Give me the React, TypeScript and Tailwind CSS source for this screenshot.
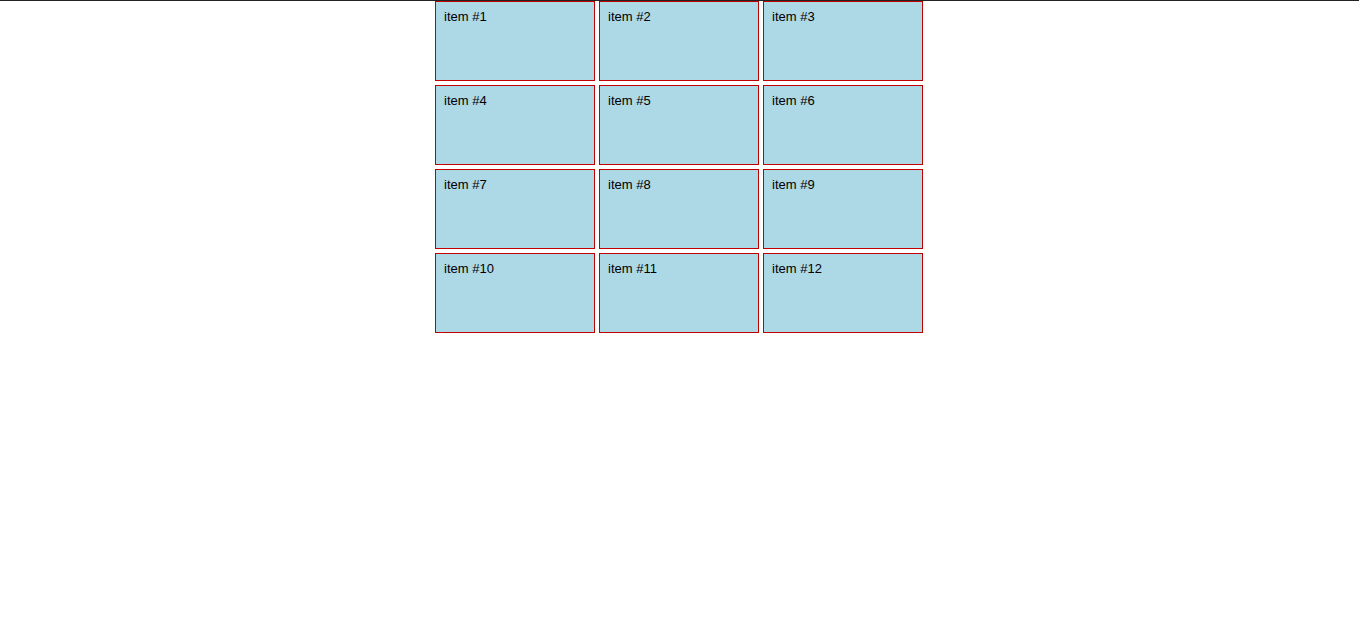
export default function App() {
  const items = Array.from({ length: 12 }, (_, i) => i + 1);

  return (
    <div className="min-h-screen border-t border-[#222] bg-white font-['Liberation_Sans',Arial,sans-serif]">
      <div className="mx-auto grid w-[489px] grid-cols-[160px_160px_160px] gap-1">
        {items.map((n) => (
          <div
            key={n}
            className="h-[80px] border border-[#c00000] bg-[#add8e6] px-2 pt-[7px] text-[13px] leading-[15px] text-black"
          >
            item #{n}
          </div>
        ))}
      </div>
    </div>
  );
}
